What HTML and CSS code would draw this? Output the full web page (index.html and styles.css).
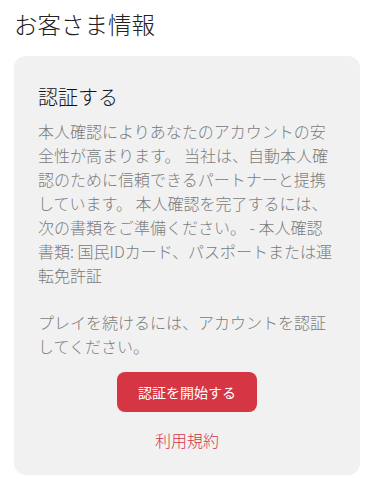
FILE: index.html
```html
<!DOCTYPE html>
<html lang="ja">
<head>
<meta charset="utf-8">
<link rel="stylesheet" href="styles.css">
</head>
<body>
<h1 class="page-title">お客さま情報</h1>
<section class="card">
  <h2 class="card-title">認証する</h2>
  <p class="card-text">本人確認によりあなたのアカウントの安全性が高まります。 当社は、自動本人確認のために信頼できるパートナーと提携しています。 本人確認を完了するには、次の書類をご準備ください。 - 本人確認書類: 国民IDカード、パスポートまたは運転免許証</p>
  <p class="card-text second">プレイを続けるには、アカウントを認証してください。</p>
  <div class="actions">
    <button class="btn-primary" type="button">認証を開始する</button>
    <a class="terms" href="#">利用規約</a>
  </div>
</section>
</body>
</html>
```

FILE: styles.css
```css
html, body {
  margin: 0;
  background: #ffffff;
}
body {
  padding: 6px 8px 0 14px;
  font-family: "Noto Sans CJK JP", "Noto Sans", sans-serif;
  font-weight: 300;
  width: 346px;
}
.page-title {
  margin: 0 0 14px 0;
  font-size: 23.5px;
  line-height: 36px;
  font-weight: 300;
  color: #222222;
}
.card {
  background: #f1f1f1;
  border-radius: 12px;
  padding: 26px 24px 23px 24px;
}
.card-title {
  margin: 0 0 7px 0;
  font-size: 20px;
  line-height: 30px;
  font-weight: 300;
  color: #111111;
}
.card-text {
  margin: 0;
  font-size: 16px;
  line-height: 24px;
  font-weight: 300;
  color: #7c7c7c;
}
.card-text.second {
  margin-top: 23px;
}
.actions {
  display: flex;
  flex-direction: column;
  align-items: center;
  margin-top: 14px;
  gap: 16px;
}
.btn-primary {
  height: 40px;
  width: 140px;
  border: none;
  border-radius: 8px;
  background: #d63543;
  color: #ffffff;
  font-family: inherit;
  font-size: 14px;
  font-weight: 400;
  padding: 0;
}
.terms {
  font-size: 16px;
  line-height: 24px;
  font-weight: 300;
  color: #d6334a;
  text-decoration: none;
}
```
